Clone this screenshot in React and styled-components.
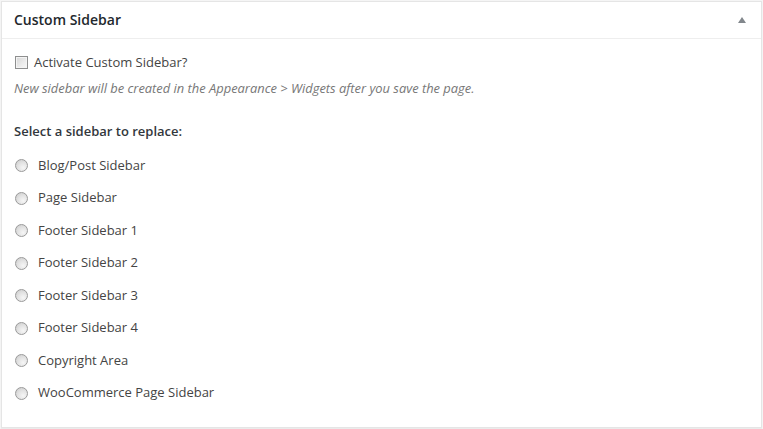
import React from 'react';
import styled, { createGlobalStyle } from 'styled-components';

const GlobalStyle = createGlobalStyle`
  body {
    margin: 0;
    background: #f5f5f5;
    font-family: "Open Sans", "Noto Sans", sans-serif;
  }
`;

const Page = styled.div`
  padding: 1px;
  width: 763px;
  height: 429px;
  box-sizing: border-box;
`;

const Box = styled.div`
  background: #fff;
  border: 1px solid #e5e5e5;
  box-shadow: 0 1px 1px rgba(0, 0, 0, 0.04);
  width: 761px;
  height: 427px;
  box-sizing: border-box;
  display: flex;
  flex-direction: column;
`;

const Header = styled.div`
  display: flex;
  align-items: center;
  justify-content: space-between;
  height: 36px;
  padding: 0 12px;
  border-bottom: 1px solid #eee;
`;

const Title = styled.h2`
  margin: 0;
  font-size: 14px;
  font-weight: 600;
  color: #23282d;
  line-height: 20px;
`;

const Toggle = styled.span`
  width: 0;
  height: 0;
  margin-right: 3px;
  margin-top: -1px;
  border-left: 4px solid transparent;
  border-right: 4px solid transparent;
  border-bottom: 6px solid #82878c;
`;

const Inside = styled.div`
  padding: 13px 12px 0 13px;
  display: flex;
  flex-direction: column;
  font-size: 13px;
  color: #444;
  line-height: 20px;
`;

const CheckRow = styled.label`
  display: flex;
  align-items: center;
  gap: 6px;
`;

const Check = styled.span`
  width: 11px;
  height: 11px;
  border: 1px solid #8e8f8f;
  background: linear-gradient(135deg, #d6d6d6 0%, #ececec 60%, #f8f8f8 100%);
  box-shadow: inset 0 0 0 1px #f4f4f4;
`;

const Description = styled.p`
  margin: 6px 0 0 -1px;
  font-size: 12.9px;
  font-style: italic;
  color: #777;
`;

const Heading = styled.p`
  margin: 23px 0 0 -1px;
  font-weight: 600;
  color: #32373c;
`;

const RadioList = styled.div`
  display: flex;
  flex-direction: column;
  margin-top: 7px;
`;

const RadioRow = styled.label`
  display: flex;
  align-items: center;
  gap: 10px;
  height: 32.5px;
  box-sizing: border-box;
  padding-top: 1px;
`;

const Radio = styled.span`
  width: 11px;
  height: 11px;
  border-radius: 50%;
  border: 1px solid #9a9a9a;
  background: radial-gradient(circle at 65% 70%, #f6f6f6 0%, #e2e2e2 50%, #c8c8c8 100%);
  margin-top: 2px;
`;

const sidebars = [
  'Blog/Post Sidebar',
  'Page Sidebar',
  'Footer Sidebar 1',
  'Footer Sidebar 2',
  'Footer Sidebar 3',
  'Footer Sidebar 4',
  'Copyright Area',
  'WooCommerce Page Sidebar',
];

const App = () => {
  return (
    <Page>
      <GlobalStyle />
      <Box>
        <Header>
          <Title>Custom Sidebar</Title>
          <Toggle />
        </Header>
        <Inside>
          <CheckRow>
            <Check />
            Activate Custom Sidebar?
          </CheckRow>
          <Description>
            New sidebar will be created in the Appearance &gt; Widgets after you save the page.
          </Description>
          <Heading>Select a sidebar to replace:</Heading>
          <RadioList>
            {sidebars.map((name) => (
              <RadioRow key={name}>
                <Radio />
                {name}
              </RadioRow>
            ))}
          </RadioList>
        </Inside>
      </Box>
    </Page>
  );
};

export default App;
